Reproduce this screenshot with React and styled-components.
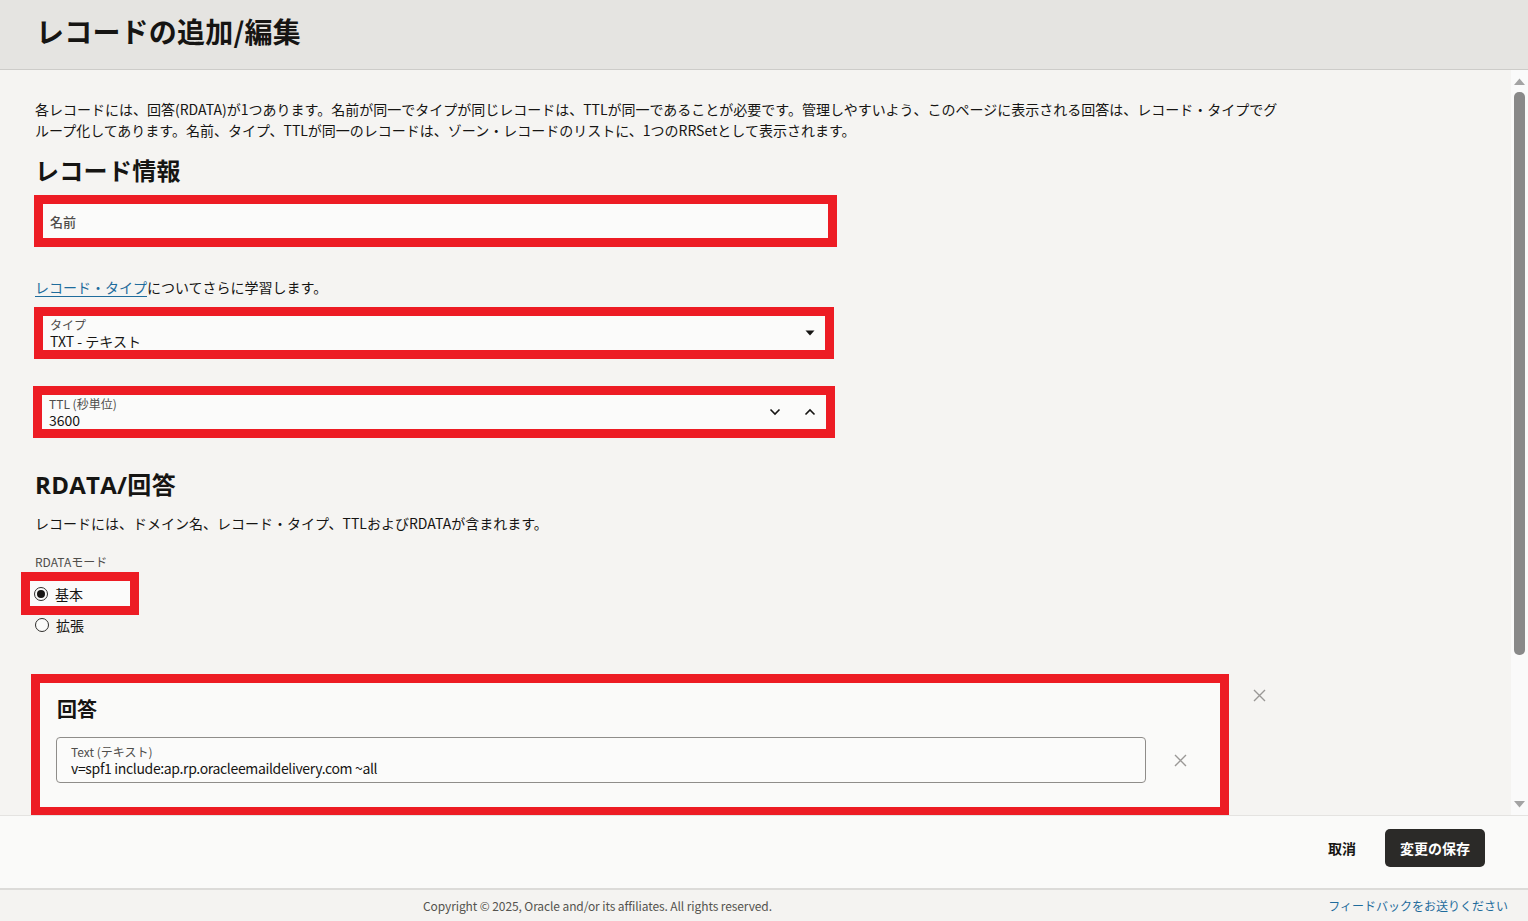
import styled, { createGlobalStyle } from "styled-components";

const GlobalStyle = createGlobalStyle`
  html, body {
    margin: 0;
    padding: 0;
  }
  body {
    font-family: "Noto Sans CJK JP", "Noto Sans", sans-serif;
    color: #161513;
    background: #f5f4f2;
  }
  * {
    box-sizing: border-box;
  }
`;

const Page = styled.div`
  height: 921px;
  display: flex;
  flex-direction: column;
  overflow: hidden;
`;

const Header = styled.header`
  flex: 0 0 70px;
  display: flex;
  align-items: center;
  padding: 0 0 8px 36px;
  background: #e5e4e1;
  border-bottom: 1px solid #cdccc9;
`;

const Title = styled.h1`
  margin: 0;
  font-size: 28px;
  line-height: 36px;
  font-weight: 700;
  letter-spacing: 0.2px;
`;

const Main = styled.div`
  flex: 1;
  min-height: 0;
  display: flex;
`;

const Content = styled.div`
  flex: 1;
  overflow: hidden;
  padding: 29px 0 0 35px;
`;

const Para = styled.p`
  margin: ${(p) => p.$mt || 0}px 0 0;
  font-size: 14px;
  line-height: 21px;
`;

const Link = styled.a`
  color: #1f6c9c;
  text-decoration: underline;
  text-underline-offset: 3px;
`;

const SectionTitle = styled.h2`
  margin: ${(p) => p.$mt}px 0 0;
  font-family: "Open Sans", "Noto Sans CJK JP", sans-serif;
  font-size: 24px;
  line-height: 32px;
  font-weight: 700;
  letter-spacing: 0.3px;
`;

const Highlight = styled.div`
  width: ${(p) => p.$w}px;
  margin: ${(p) => p.$mt}px 0 0 ${(p) => p.$ml}px;
  border: 9px solid #ed1c24;
  background: #fbfbfa;
`;

const Field = styled.div`
  height: 34px;
  display: flex;
  align-items: center;
  padding: 0 ${(p) => p.$pr || 7}px 0 7px;
`;

const FieldText = styled.div`
  flex: 1;
  display: flex;
  flex-direction: column;
`;

const FieldLabel = styled.span`
  font-size: ${(p) => p.$size || 12}px;
  font-weight: ${(p) => p.$weight || 400};
  line-height: 15px;
  color: #4f4d4a;
`;

const FieldValue = styled.span`
  font-size: 14px;
  line-height: 18px;
  color: #161513;
  letter-spacing: ${(p) => (p.$tight ? "-0.35px" : "0")};
`;

const Icons = styled.div`
  display: flex;
  align-items: center;
  gap: ${(p) => p.$gap || 0}px;
`;

const SmallLabel = styled.div`
  margin-top: 20px;
  font-size: 12px;
  line-height: 16px;
  color: #4f4d4a;
`;

const RadioRow = styled.label`
  display: flex;
  align-items: center;
  gap: 7px;
  height: ${(p) => p.$h || 20}px;
  padding-left: ${(p) => p.$pl || 0}px;
  font-size: 14px;
`;

const RadioDot = styled.span`
  width: 14px;
  height: 14px;
  border-radius: 50%;
  border: 1px solid #2f2e2c;
  display: flex;
  align-items: center;
  justify-content: center;
  background: #fbfbfa;

  &::after {
    content: "";
    width: 8px;
    height: 8px;
    border-radius: 50%;
    background: ${(p) => (p.$checked ? "#161513" : "transparent")};
  }
`;

const AnswerRow = styled.div`
  display: flex;
  align-items: flex-start;
  gap: 24px;
  margin: 39px 0 0 -4px;
`;

const AnswerPanel = styled.div`
  width: 1198px;
  border: 9px solid #ed1c24;
  background: #fafaf9;
  padding: 12px 33px 24px 16px;
`;

const AnswerTitle = styled.h3`
  margin: 0 0 0 1px;
  font-size: 20px;
  line-height: 28px;
  font-weight: 700;
`;

const InputRow = styled.div`
  display: flex;
  align-items: center;
  gap: 28px;
  margin-top: 14px;
`;

const TextInput = styled.div`
  flex: 1;
  height: 46px;
  border: 1px solid #8f8d8a;
  border-radius: 4px;
  padding: 0 14px;
  display: flex;
  flex-direction: column;
  justify-content: center;
  background: #fbfbfa;
`;

const CloseButton = styled.button`
  border: none;
  background: transparent;
  padding: 0;
  margin-top: ${(p) => p.$mt || 0}px;
  display: flex;
  cursor: pointer;
`;

const Scrollbar = styled.div`
  flex: 0 0 17px;
  display: flex;
  flex-direction: column;
  align-items: center;
  background: #fafafa;
`;

const ScrollArrow = styled.div`
  height: 22px;
  display: flex;
  align-items: center;
  justify-content: center;
`;

const Thumb = styled.div`
  width: 11px;
  height: 563px;
  border-radius: 5px;
  background: #898989;
`;

const Spacer = styled.div`
  flex: 1;
`;

const ActionBar = styled.div`
  flex: 0 0 75px;
  display: flex;
  justify-content: flex-end;
  align-items: center;
  gap: 15px;
  padding: 0 43px 8px 0;
  background: #fafaf9;
  border-top: 1px solid #e4e3e1;
  border-bottom: 2px solid #dcdbd9;
`;

const Button = styled.button`
  height: 38px;
  padding: 0 ${(p) => (p.$primary ? 15 : 14)}px;
  border: none;
  border-radius: 5px;
  font-family: inherit;
  font-size: 14px;
  font-weight: 700;
  color: ${(p) => (p.$primary ? "#ffffff" : "#161513")};
  background: ${(p) => (p.$primary ? "#2b2a28" : "transparent")};
  cursor: pointer;
`;

const Footer = styled.footer`
  flex: 0 0 31px;
  display: flex;
  align-items: center;
  padding: 0 20px 0 423px;
  font-size: 12px;
  background: #f4f3f1;
`;

const Copyright = styled.span`
  color: #55534f;
  letter-spacing: -0.1px;
`;

const Feedback = styled.a`
  margin-left: auto;
  color: #1f6c9c;
  text-decoration: none;
`;

const CaretDown = () => (
  <svg width="10" height="6" viewBox="0 0 10 6">
    <path d="M0.5 0.5h9L5 5.5z" fill="#161513" />
  </svg>
);

const Chevron = ({ up }) => (
  <svg width="12" height="8" viewBox="0 0 12 8">
    <path
      d={up ? "M1.5 6.5L6 2l4.5 4.5" : "M1.5 1.5L6 6l4.5-4.5"}
      fill="none"
      stroke="#161513"
      strokeWidth="1.6"
    />
  </svg>
);

const CloseIcon = () => (
  <svg width="13" height="13" viewBox="0 0 13 13">
    <path d="M1 1l11 11M12 1L1 12" stroke="#9a9896" strokeWidth="1.4" />
  </svg>
);

const ScrollTriangle = ({ up }) => (
  <svg width="11" height="7" viewBox="0 0 11 7">
    <path d={up ? "M0 7L5.5 0.5 11 7z" : "M0 0h11L5.5 6.5z"} fill="#a3a3a3" />
  </svg>
);

export default function App() {
  return (
    <Page>
      <GlobalStyle />
      <Header>
        <Title>レコードの追加/編集</Title>
      </Header>
      <Main>
        <Content>
          <Para>
            各レコードには、回答(RDATA)が1つあります。名前が同一でタイプが同じレコードは、TTLが同一であることが必要です。管理しやすいよう、このページに表示される回答は、レコード・タイプでグ
            <br />
            ループ化してあります。名前、タイプ、TTLが同一のレコードは、ゾーン・レコードのリストに、1つのRRSetとして表示されます。
          </Para>

          <SectionTitle $mt={14}>レコード情報</SectionTitle>
          <Highlight $w={803} $mt={8} $ml={-1}>
            <Field>
              <FieldText>
                <FieldLabel $size={13} $weight={500}>名前</FieldLabel>
              </FieldText>
            </Field>
          </Highlight>

          <Para $mt={30}>
            <Link href="#">レコード・タイプ</Link>についてさらに学習します。
          </Para>

          <Highlight $w={800} $mt={9} $ml={-1}>
            <Field $pr={10}>
              <FieldText>
                <FieldLabel>タイプ</FieldLabel>
                <FieldValue>TXT - テキスト</FieldValue>
              </FieldText>
              <CaretDown />
            </Field>
          </Highlight>

          <Highlight $w={802} $mt={27} $ml={-2}>
            <Field $pr={10}>
              <FieldText>
                <FieldLabel>TTL (秒単位)</FieldLabel>
                <FieldValue>3600</FieldValue>
              </FieldText>
              <Icons $gap={23}>
                <Chevron />
                <Chevron up />
              </Icons>
            </Field>
          </Highlight>

          <SectionTitle $mt={31}>RDATA/回答</SectionTitle>
          <Para $mt={12}>
            レコードには、ドメイン名、レコード・タイプ、TTLおよびRDATAが含まれます。
          </Para>

          <SmallLabel>RDATAモード</SmallLabel>
          <Highlight $w={118} $mt={2} $ml={-14}>
            <RadioRow $h={25} $pl={4}>
              <RadioDot $checked />
              基本
            </RadioRow>
          </Highlight>
          <RadioRow>
            <RadioDot />
            拡張
          </RadioRow>

          <AnswerRow>
            <AnswerPanel>
              <AnswerTitle>回答</AnswerTitle>
              <InputRow>
                <TextInput>
                  <FieldLabel>Text (テキスト)</FieldLabel>
                  <FieldValue $tight>v=spf1 include:ap.rp.oracleemaildelivery.com ~all</FieldValue>
                </TextInput>
                <CloseButton aria-label="削除">
                  <CloseIcon />
                </CloseButton>
              </InputRow>
            </AnswerPanel>
            <CloseButton $mt={15} aria-label="回答の削除">
              <CloseIcon />
            </CloseButton>
          </AnswerRow>
        </Content>
        <Scrollbar>
          <ScrollArrow>
            <ScrollTriangle up />
          </ScrollArrow>
          <Thumb />
          <Spacer />
          <ScrollArrow>
            <ScrollTriangle />
          </ScrollArrow>
        </Scrollbar>
      </Main>
      <ActionBar>
        <Button>取消</Button>
        <Button $primary>変更の保存</Button>
      </ActionBar>
      <Footer>
        <Copyright>Copyright © 2025, Oracle and/or its affiliates. All rights reserved.</Copyright>
        <Feedback href="#">フィードバックをお送りください</Feedback>
      </Footer>
    </Page>
  );
}
